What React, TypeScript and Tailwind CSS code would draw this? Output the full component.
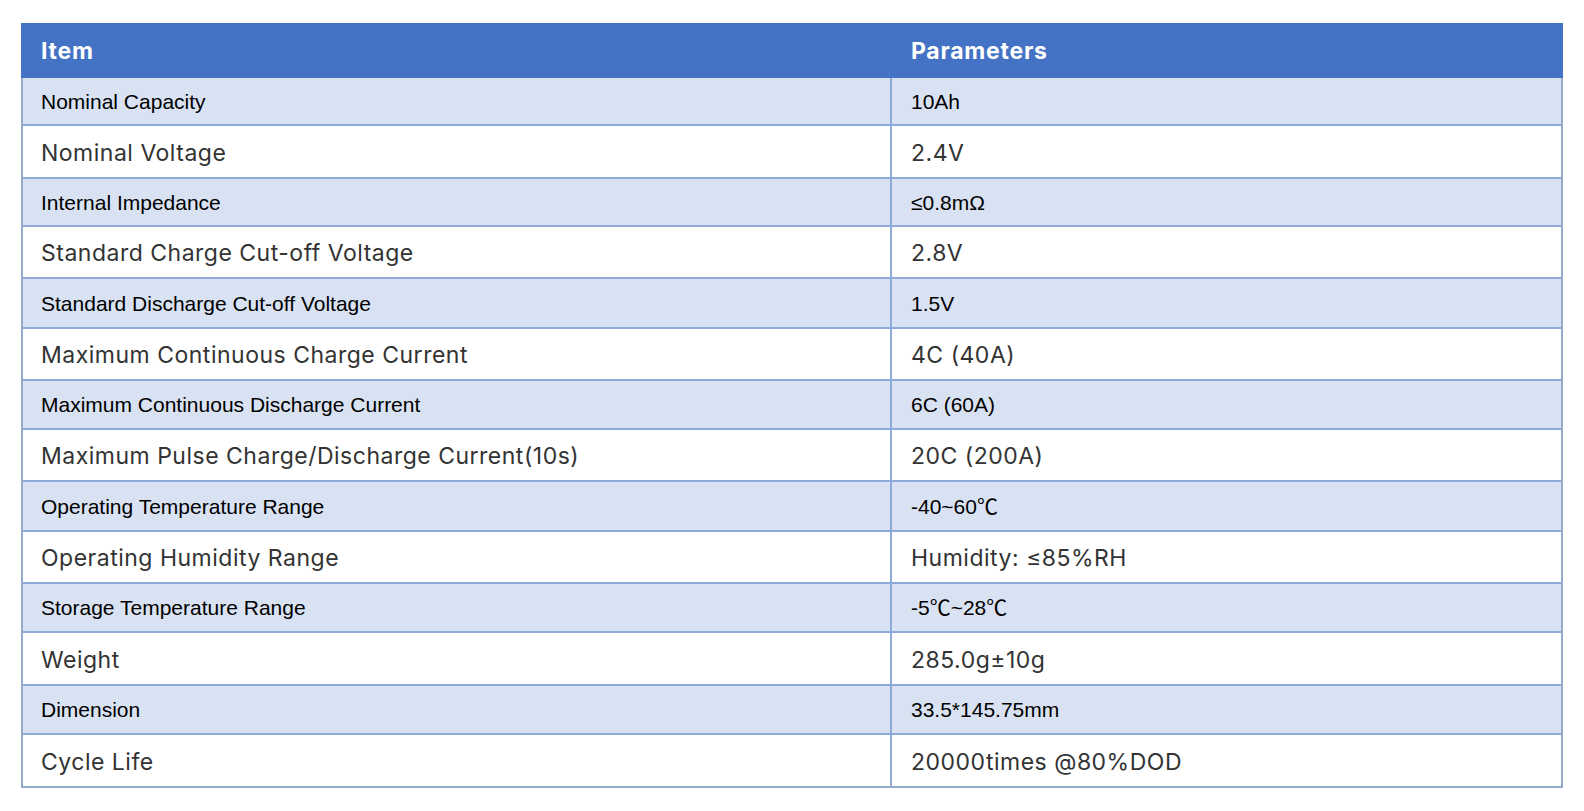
import React from "react";

type Row = { item: string; value: string; shaded: boolean; h: string };

const rows: Row[] = [
  { item: "Nominal Capacity", value: "10Ah", shaded: true, h: "h-[48px]" },
  { item: "Nominal Voltage", value: "2.4V", shaded: false, h: "h-[53px]" },
  { item: "Internal Impedance", value: "≤0.8mΩ", shaded: true, h: "h-[48px]" },
  { item: "Standard Charge Cut-off Voltage", value: "2.8V", shaded: false, h: "h-[52px]" },
  { item: "Standard Discharge Cut-off Voltage", value: "1.5V", shaded: true, h: "h-[50px]" },
  { item: "Maximum Continuous Charge Current", value: "4C (40A)", shaded: false, h: "h-[52px]" },
  { item: "Maximum Continuous Discharge Current", value: "6C (60A)", shaded: true, h: "h-[49px]" },
  { item: "Maximum Pulse Charge/Discharge Current(10s)", value: "20C (200A)", shaded: false, h: "h-[52px]" },
  { item: "Operating Temperature Range", value: "-40~60℃", shaded: true, h: "h-[50px]" },
  { item: "Operating Humidity Range", value: "Humidity: ≤85%RH", shaded: false, h: "h-[52px]" },
  { item: "Storage Temperature Range", value: "-5℃~28℃", shaded: true, h: "h-[49px]" },
  { item: "Weight", value: "285.0g±10g", shaded: false, h: "h-[53px]" },
  { item: "Dimension", value: "33.5*145.75mm", shaded: true, h: "h-[49px]" },
  { item: "Cycle Life", value: "20000times @80%DOD", shaded: false, h: "h-[53px]" },
];

const shadedText =
  "pt-[1px] text-[21px] text-black [font-family:'Liberation_Sans','Noto_Sans_CJK_SC',sans-serif]";
const plainText =
  "pt-[3px] text-[23px] tracking-[0.5px] text-[#333333] [font-family:Inter,'Noto_Sans_CJK_SC',sans-serif]";

export default function App() {
  return (
    <div className="w-[1584px] h-[811px] bg-white pt-[23px] pl-[21px]">
      <div className="w-[1542px]">
        <div className="flex h-[55px] pt-[2px] bg-[#4472c4] text-white font-bold text-[23px] tracking-[0.75px] [font-family:Inter,'Noto_Sans',sans-serif]">
          <div className="w-[871px] flex items-center pl-[20px]">Item</div>
          <div className="flex-1 flex items-center pl-[19px]">Parameters</div>
        </div>
        <div className="border-x-2 border-[#94a9cc]">
          {rows.map((r, i) => (
            <div
              key={i}
              className={`flex ${r.h} border-b-2 ${
                i === rows.length - 1 ? "border-[#94a9cc]" : "border-[#8eaadb]"
              } ${r.shaded ? "bg-[#d9e2f3]" : "bg-white"}`}
            >
              <div
                className={`w-[869px] border-r-2 border-[#8eaadb] flex items-center pl-[18px] ${
                  r.shaded ? shadedText : plainText
                }`}
              >
                {r.item}
              </div>
              <div
                className={`flex-1 flex items-center pl-[19px] ${
                  r.shaded ? shadedText : plainText
                }`}
              >
                {r.value}
              </div>
            </div>
          ))}
        </div>
      </div>
    </div>
  );
}
